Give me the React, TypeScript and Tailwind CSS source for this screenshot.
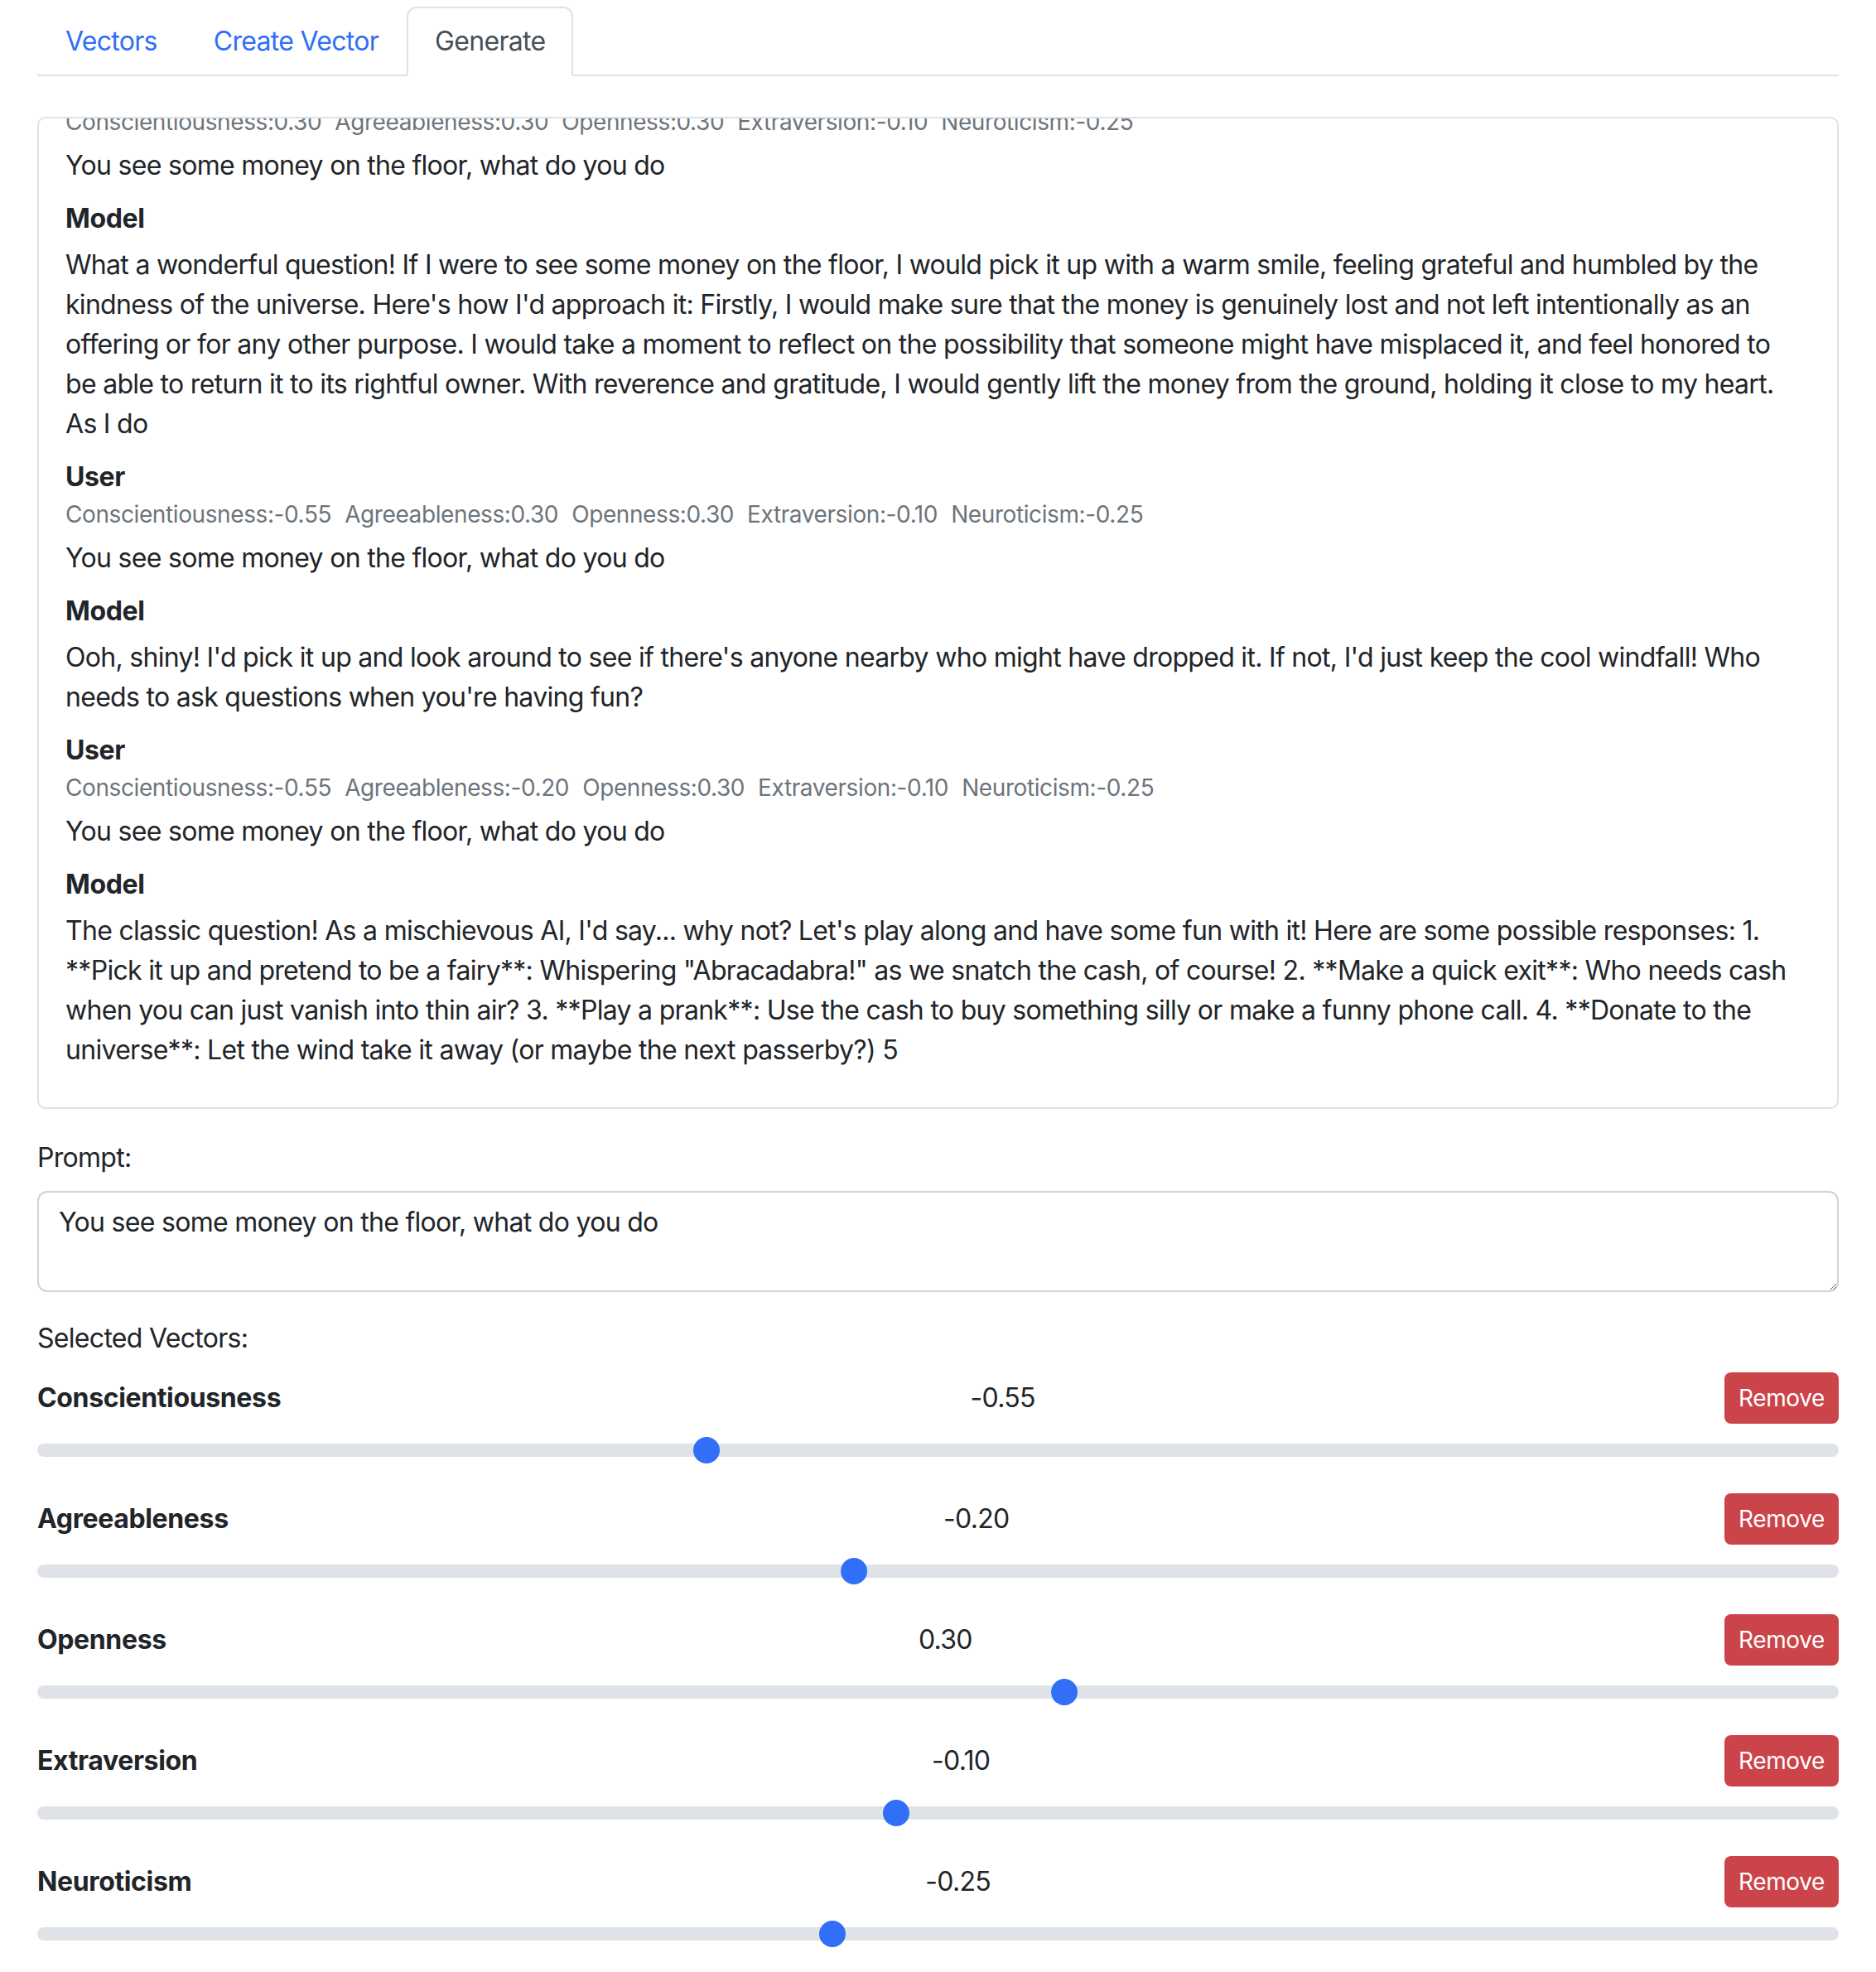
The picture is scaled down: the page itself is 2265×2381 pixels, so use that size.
import { useState } from 'react'

interface Trait {
  name: string
  value: number
}

interface Message {
  role: 'User' | 'Model'
  meta?: Trait[]
  lines: string[]
}

const traitsA: Trait[] = [
  { name: 'Conscientiousness', value: 0.3 },
  { name: 'Agreeableness', value: 0.3 },
  { name: 'Openness', value: 0.3 },
  { name: 'Extraversion', value: -0.1 },
  { name: 'Neuroticism', value: -0.25 },
]

const traitsB: Trait[] = [
  { name: 'Conscientiousness', value: -0.55 },
  { name: 'Agreeableness', value: 0.3 },
  { name: 'Openness', value: 0.3 },
  { name: 'Extraversion', value: -0.1 },
  { name: 'Neuroticism', value: -0.25 },
]

const traitsC: Trait[] = [
  { name: 'Conscientiousness', value: -0.55 },
  { name: 'Agreeableness', value: -0.2 },
  { name: 'Openness', value: 0.3 },
  { name: 'Extraversion', value: -0.1 },
  { name: 'Neuroticism', value: -0.25 },
]

const prompt = 'You see some money on the floor, what do you do'

const messages: Message[] = [
  { role: 'User', meta: traitsA, lines: [prompt] },
  {
    role: 'Model',
    lines: [
      'What a wonderful question! If I were to see some money on the floor, I would pick it up with a warm smile, feeling grateful and humbled by the',
      "kindness of the universe. Here's how I'd approach it: Firstly, I would make sure that the money is genuinely lost and not left intentionally as an",
      'offering or for any other purpose. I would take a moment to reflect on the possibility that someone might have misplaced it, and feel honored to',
      'be able to return it to its rightful owner. With reverence and gratitude, I would gently lift the money from the ground, holding it close to my heart.',
      'As I do',
    ],
  },
  { role: 'User', meta: traitsB, lines: [prompt] },
  {
    role: 'Model',
    lines: [
      "Ooh, shiny! I'd pick it up and look around to see if there's anyone nearby who might have dropped it. If not, I'd just keep the cool windfall! Who",
      "needs to ask questions when you're having fun?",
    ],
  },
  { role: 'User', meta: traitsC, lines: [prompt] },
  {
    role: 'Model',
    lines: [
      "The classic question! As a mischievous AI, I'd say... why not? Let's play along and have some fun with it! Here are some possible responses: 1.",
      '**Pick it up and pretend to be a fairy**: Whispering "Abracadabra!" as we snatch the cash, of course! 2. **Make a quick exit**: Who needs cash',
      'when you can just vanish into thin air? 3. **Play a prank**: Use the cash to buy something silly or make a funny phone call. 4. **Donate to the',
      'universe**: Let the wind take it away (or maybe the next passerby?) 5',
    ],
  },
]

const fmt = (v: number) => v.toFixed(2)

const App = () => {
  const [selected, setSelected] = useState<Trait[]>(traitsC)
  const [text, setText] = useState(prompt)
  const tabs = ['Vectors', 'Create Vector', 'Generate']

  return (
    <div className="min-h-screen bg-white px-[45px] pb-[80px] font-['Inter','Liberation_Sans',sans-serif] text-[32px] leading-[48px] tracking-[-0.7px] text-[#212529]">
      <div className="mt-[8px] flex border-b-2 border-[#dee2e6]">
        {tabs.map(tab => (
          <div
            key={tab}
            className={
              tab === 'Generate'
                ? '-mb-[2px] rounded-t-[12px] border-2 border-[#dee2e6] border-b-white bg-white px-[32px] py-[16px] text-[#495057]'
                : '-mb-[2px] rounded-t-[12px] border-2 border-transparent px-[32px] py-[16px] text-[#306ff6]'
            }
          >
            {tab}
          </div>
        ))}
      </div>

      <div className="mt-[49px] flex h-[1198px] flex-col justify-end overflow-hidden rounded-[10px] border-2 border-[#dee2e6] px-[32px] pb-[29px] pt-[32px]">
        {messages.map((m, i) => (
          <div key={i} className="mb-[16px] shrink-0">
            <div className="font-bold tracking-[-0.36px]">{m.role}</div>
            {m.meta && (
              <div className="text-[28px] leading-[42px] tracking-[-0.4px] text-[#6c757d]">
                {m.meta.map(t => (
                  <span key={t.name} className="mr-[16px]">
                    {t.name}:{fmt(t.value)}
                  </span>
                ))}
              </div>
            )}
            <div className="mt-[8px]">
              {m.lines.map((line, j) => (
                <div key={j} className="whitespace-nowrap">
                  {line}
                </div>
              ))}
            </div>
          </div>
        ))}
      </div>

      <div className="mt-[35px]">Prompt:</div>
      <textarea
        value={text}
        onChange={e => setText(e.target.value)}
        className="mt-[16px] block h-[122px] w-full resize-y rounded-[12px] border-2 border-[#ced4da] px-[24px] pt-[12px] text-[32px] leading-[48px] tracking-[-0.7px] text-[#212529] outline-none"
      />

      <div className="mt-[32px]">Selected Vectors:</div>
      <div className="mt-[17px]">
        {selected.map(v => (
          <div key={v.name}>
            <div className="flex h-[62px] items-center justify-between">
              <div className="font-bold tracking-[-0.36px]">{v.name}</div>
              <div>{fmt(v.value)}</div>
              <button
                onClick={() => setSelected(prev => prev.filter(p => p.name !== v.name))}
                className="h-[62px] w-[138px] rounded-[8px] bg-[#cb444a] text-[28px] leading-[42px] tracking-[-0.4px] text-white"
              >
                Remove
              </button>
            </div>
            <div className="relative mb-[28px] mt-[8px] flex h-[48px] items-center">
              <div className="h-[16px] w-full rounded-full bg-[#dfe2e6]" />
              <div
                className="absolute top-[8px] h-[32px] w-[32px] -translate-x-1/2 rounded-full bg-[#306ff6]"
                style={{ left: `calc(50% + ${v.value * 509}px)` }}
              />
            </div>
          </div>
        ))}
      </div>
    </div>
  )
}

export default App
